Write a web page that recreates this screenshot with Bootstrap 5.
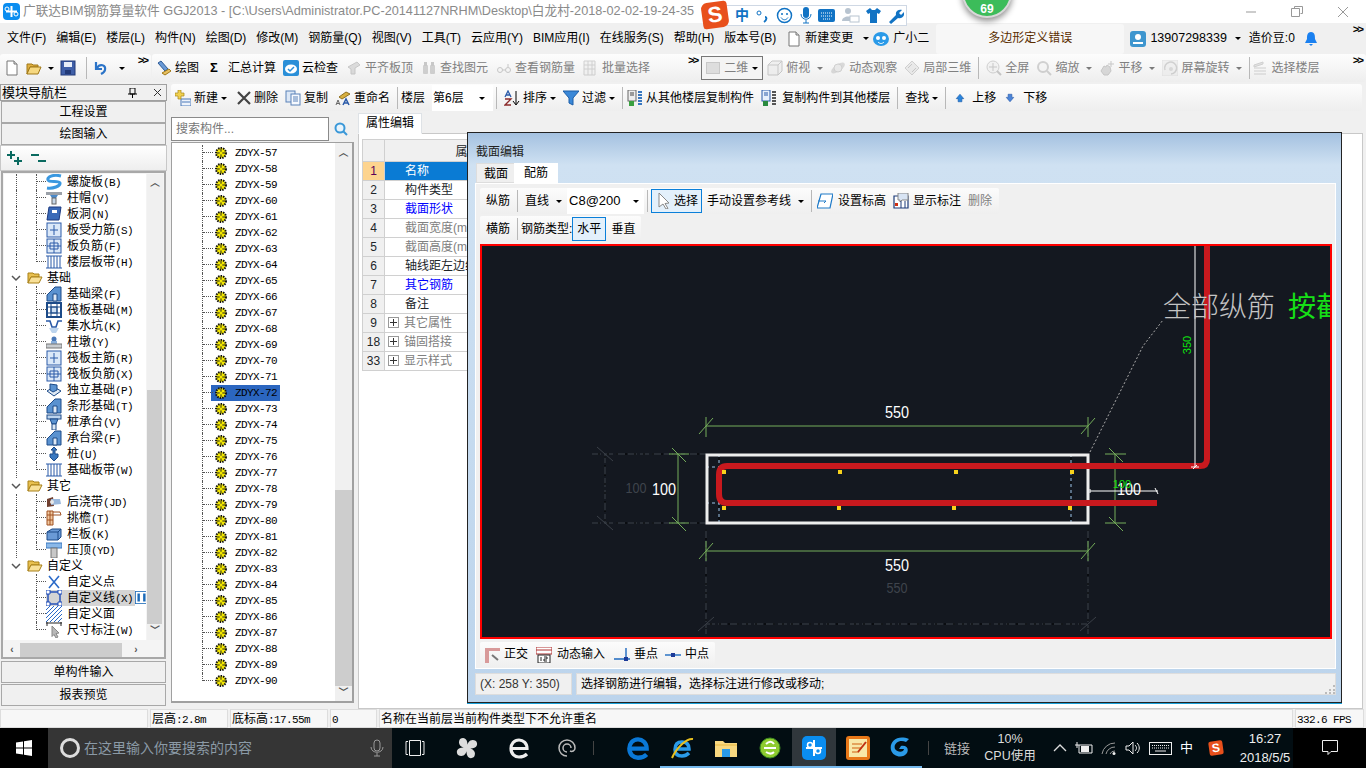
<!DOCTYPE html>
<html lang="zh">
<head>
  <meta charset="UTF-8">
  <title>广联达BIM钢筋算量软件 GGJ2013</title>
  <link href="https://cdn.jsdelivr.net/npm/bootstrap@5.3.0/dist/css/bootstrap.min.css" rel="stylesheet">
  <style>
    html, body { width: 1366px; height: 768px; overflow: hidden; }
    body {
      position: relative;
      font: 12px/1.2 "Liberation Sans", "Noto Sans CJK SC", sans-serif;
      color: #000;
      background: #f0f0f0;
    }
    .ic { width: 16px; height: 16px; flex: none; display: block; }
    .ic-sm { width: 10px; height: 16px; flex: none; display: block; }
    .mono { font: 11px "Liberation Mono", "Noto Sans CJK SC", monospace; letter-spacing: -.6px; }
    .caret-dn { width: 0; height: 0; border: 3px solid transparent; border-top: 3px solid #000; border-bottom: 0; flex: none; }

    /* title bar */
    .title-bar { height: 23px; background: #fff; color: #8a8a8a; font-size: 12.7px; white-space: nowrap; padding-left: 3px; }
    .title-bar .winbtn { width: 46px; display: flex; justify-content: center; }
    .app-logo { width: 17px; height: 17px; background: #0a8df0; border-radius: 4px; flex: none; }
    .ball { position: absolute; left: 962px; top: -32px; width: 50px; height: 50px; border-radius: 50%; background: #3cbc5a; border: 2px solid #d8d8d8; box-shadow: 0 3px 6px rgba(0,0,0,.45); color: #fff; font-weight: 700; font-size: 12px; text-align: center; padding-top: 32px; }
    .ime { position: absolute; left: 703px; top: 5px; width: 204px; height: 21px; background: #fff; border: 1px solid #cfd8e4; color: #1173c4; padding-left: 31px; gap: 6.5px; }
    .ime-s { position: absolute; left: 702px; top: 2px; width: 26px; height: 26px; background: #e8501c; border-radius: 6px 3px 6px 3px; transform: rotate(-8deg); color: #fff; font: 700 22px/25px "Liberation Sans", sans-serif; text-align: center; }

    /* menu and toolbars */
    .menu-bar { height: 31px; padding-left: 7px; }
    .menu-bar .mi { margin-right: 10px; white-space: nowrap; }
    .err-box { width: 188px; height: 30px; background: #f7f7f7; color: #5a2d00; border-radius: 3px; margin-left: 7px; }
    .tbar { height: 28px; background: linear-gradient(#fdfdfd, #eeeeee); border-radius: 3px; white-space: nowrap; }
    .tool { display: inline-flex; align-items: center; gap: 3px; }
    .tool.g1 { margin-left: 1px; }
    .off { color: #808080; }
    .off .ic { opacity: .5; }
    .tsep { width: 1px; height: 22px; background: #b8b8b8; flex: none; }
    .more { font: 700 11px/1 "Liberation Mono", monospace; letter-spacing: -2px; align-self: flex-start; margin-top: 2px; }
    .combo-2d { width: 62px; height: 24px; border: 1px solid #777; background: #f4f4f4; padding: 0 4px; color: #808080; }
    .combo-2d i { width: 14px; height: 12px; background: #ddd; border: 1px solid #c8c8c8; display: block; }
    .floor-combo { width: 61px; height: 26px; background: #fff; padding: 0 8px 0 1px; }

    /* left navigator */
    .main-wrap { height: 624px; }
    .nav-pane { width: 167px; flex: none; }
    .nav-head { height: 17px; border: 1px solid #a0a0a0; font-size: 13px; line-height: 15px; padding-left: 1px; }
    .nav-btn.btn { display: block; width: 165px; height: 22px; margin-left: 1px; padding: 0; font-size: 12px; line-height: 20px; border: 1px solid #a8a8a8; border-radius: 0; background: #f0f0f0; color: #000; }
    .plus-row { height: 26px; background: linear-gradient(#fff, #eee); border: 1px solid #c8c8c8; padding-left: 6px; }
    .tree-box { height: 488px; margin: 0 1px; border: 2px solid #a8a8a8; background: #f4f4f4; padding: 1px 0 0 1px; }
    .tree-view { height: 466px; width: 142px; background: #fff; overflow: hidden; }
    .vscroll { width: 16px; background: #f0f0f0; position: relative; }
    .arrow-up, .arrow-dn, .arrow-lf, .arrow-rt { display: block; font: 700 10px/14px "Liberation Sans", "Noto Sans CJK SC", sans-serif; color: #555; text-align: center; }
    .tr { height: 16px; display: flex; white-space: nowrap; position: relative; }
    .tr-l1 { width: 13px; flex: none; border-right: 1px dotted #555; }
    .tr-l2 { width: 20px; flex: none; border-right: 1px dotted #555; }
    .tr-half { height: 8px; }
    .tr-hz { width: 9px; height: 8px; flex: none; border-bottom: 1px dotted #555; }
    .tr-ch { width: 23px; flex: none; text-align: center; }
    .tr-folder { margin-left: 4px; line-height: 16px; }
    .tr-name { margin-left: 5px; line-height: 16px; }
    .tr.sel .tr-name, .tr.sel .ic { background: #d4d4d4; }
    .tr.sel .tr-name { padding-right: 2px; margin-left: 0; padding-left: 5px; }
    .tag-ic { width: 13px; height: 13px; flex: none; display: block; margin-top: 1px; }

    /* component tree */
    .work-col { width: 1192px; margin-left: 4px; }
    .bar-3 { height: 27px; padding: 1px 0 0 4px; width: 1191px; }
    .work-body { height: 597px; }
    .list-pane { width: 183px; flex: none; padding-top: 6px; }
    .search-box { height: 24px; }
    .search-box .form-control { height: 24px; border-radius: 0; padding: 0 4px; font-size: 12px; border: 1px solid #8a8a8a; color: #888; }
    .search-box .form-control::placeholder { color: #777; }
    .search-btn { width: 26px; background: #f0f0f0; display: flex; align-items: center; justify-content: center; }
    .list-area { height: 561px; margin-top: 1px; background: #fff; border: 1px solid #a0a0a0; border-width: 1px 2px 2px 1px; overflow: hidden; }
    .zd-tree { flex: 1; padding: 2px 0 0 30px; }
    .zd { height: 16px; display: flex; align-items: flex-start; border-left: 1px dotted #555; }
    .zd.tail { height: 8px; }
    .zd .lnk { width: 10px; height: 8px; border-bottom: 1px dotted #555; flex: none; }
    .zd .zd-ic { width: 12px; height: 12px; flex: none; display: block; margin: 2px 0 0 2px; }
    .zd .nm { line-height: 16px; padding-left: 8px; width: 50px; }
    .zd.on { background: linear-gradient(#2b66c0, #2b66c0) no-repeat 8px 0 / 69px 16px; }

    /* property table */
    .prop-pane { flex: 1; margin-left: 4px; padding-top: 1px; }
    .nav-tabs.prop-tabs { border-bottom: 1px solid #c8c8c8; height: 21px; }
    .prop-tabs .nav-link { padding: 2px 7px; height: 21px; font-size: 12px; color: #000; border: 1px solid #c8c8c8; border-bottom-color: #fff; border-radius: 0; background: #fff; margin: 0; }
    .prop-area { height: 575px; background: #fff; border: 1px solid #c8c8c8; border-top: 0; padding: 5px 0 0 3px; }
    .prop-table.table { width: 400px; margin: 0; table-layout: fixed; border-color: #c8c8c8; font-size: 12px; }
    .prop-table td, .prop-table th { padding: 0; height: 19px; line-height: 18px; border: 1px solid #d0d0d0; font-weight: 400; white-space: nowrap; overflow: hidden; }
    .prop-table .num { width: 22px; background: #f0f0f0; text-align: center; font-size: 12px; }
    .prop-table .nm-cell { padding-left: 20px; }
    .prop-table th { height: 22px; text-align: center; background: #f0f0f0; }
    .prop-table .cur-num { background: #fdd48f; color: #5a005a; }
    .prop-table .cur-name { background: #0a7bd4; color: #fff; }
    .blue-t { color: #0000ff; }
    .gray-t { color: #808080; }
    .pbox { display: inline-block; width: 11px; height: 11px; border: 1px solid #999; margin: 0 5px 0 3px; position: relative; vertical-align: -1px; background: linear-gradient(#333,#333) no-repeat center / 7px 1px, linear-gradient(#333,#333) no-repeat center / 1px 7px; }

    /* section dialog */
    .sec-dialog { position: absolute; left: 467px; top: 132px; width: 875px; height: 571px; background: linear-gradient(#a4c1e0, #cfe1f2 32px, #bcd4ec); border: 1px solid #222; box-shadow: 0 1px 0 #1aa0d8; }
    .dlg-title { height: 30px; padding: 12px 0 0 8px; color: #222; font-size: 12px; }
    .dlg-tabs { height: 20px; padding-left: 8px; font-size: 12px; }
    .dlg-tabs span { height: 20px; padding: 3px 7px 0; background: #efefef; border: 1px solid #ddd; }
    .dlg-tabs .on-tab { background: #fff; border-color: #fff; padding: 2px 9px 0; margin-left: -2px; }
    .dlg-body { width: 861px; height: 486px; margin-left: 7px; background: #f0f0f0; border: 1px solid #fff; padding: 4px 4px 0; }
    .dbar { height: 26px; background: linear-gradient(#fcfcfc, #efefef); border-radius: 2px; white-space: nowrap; gap: 7px; padding-left: 6px; }
    .rebar-combo { width: 77px; height: 26px; background: #fff; padding: 0 5px 0 2px; margin-left: -2px; font-size: 13px; }
    .act { border: 1px solid #0a7fd9; background: #e3f0fb; height: 24px; display: inline-flex; align-items: center; gap: 2px; padding: 0 3px 0 4px; }
    .canvas-box { height: 395px; width: 852px; border: 2px solid #f00; background: #141820; overflow: hidden; margin-top: 2px; }
    .canvas-box svg { display: block; }
    .canvas-box text { font-family: "Liberation Sans", "Noto Sans CJK SC", sans-serif; }
    .dlg-status { height: 22px; margin: 4px 0 0 7px; width: 861px; }
    .dlg-status div { background: #f0f0f0; border: 1px solid #ddd; line-height: 20px; padding-left: 4px; }

    /* bottom status and taskbar */
    .status-bar { height: 20px; padding-top: 1px; }
    .status-bar div { height: 19px; background: #f7f7f7; border: 1px solid #ddd; line-height: 18px; padding-left: 1px; overflow: hidden; white-space: nowrap; margin-right: 2px; flex: none; }
    .task-bar { height: 40px; background: #020d12; color: #ddd; }
    .start-cell { width: 48px; height: 40px; background: #000; display: flex; align-items: center; justify-content: center; }
    .search-task { width: 344px; height: 40px; background: #353535; color: #8b9aa6; font-size: 14px; padding-left: 12px; }
    .cortana { width: 20px; height: 20px; border: 3px solid #ddd; border-radius: 50%; margin: 0 4px 0 0; flex: none; }
    .t-cell { width: 44px; height: 40px; display: flex; align-items: center; justify-content: center; flex: none; position: relative; }
    .t-cell.run { box-shadow: inset 0 -2px 0 #76b9ed; }
    .t-cell.cur { background: #30373c; box-shadow: inset 0 -2px 0 #76b9ed; }
    .tray-t { font-size: 13px; line-height: 19px; text-align: center; white-space: nowrap; }
  </style>
</head>
<body>
  <svg width="0" height="0" class="d-none">
    <defs>
      <symbol id="i-new" viewBox="0 0 16 16"><path d="M3 1h7l3 3v11H3z" fill="#fff" stroke="#777"/><path d="M10 1v3h3" fill="#ddd" stroke="#777"/></symbol>
      <symbol id="i-open" viewBox="0 0 16 16"><path d="M1 4h5l1 1h5v2H4l-3 7z" fill="#e0b040" stroke="#a07818"/><path d="M4 7h11l-3 7H1z" fill="#f6d880" stroke="#a07818"/></symbol>
      <symbol id="i-save" viewBox="0 0 16 16"><rect x="1" y="1" width="14" height="14" fill="#3f5fa8" stroke="#223a78"/><rect x="4" y="2" width="8" height="5" fill="#e8eef8"/><rect x="5" y="10" width="6" height="4" fill="#223a78"/></symbol>
      <symbol id="i-undo" viewBox="0 0 16 16"><path d="M3 2v7h6M4 8c3-5 9-3 8 2-.4 2-2 3-4 4" fill="none" stroke="#2c74c8" stroke-width="2.200"/></symbol>
      <symbol id="i-draw" viewBox="0 0 16 16"><path d="M2 3l3-2 7 8-3 2z" fill="#6a9ad6" stroke="#2c5a96"/><path d="M6 13l7-4 2 2-6 4z" fill="#e8c060" stroke="#a07818"/></symbol>
      <symbol id="i-cloud" viewBox="0 0 16 16"><rect x="0" y="0" width="16" height="16" rx="2" fill="#2a8fd8"/><ellipse cx="8" cy="9" rx="6" ry="4.500" fill="#fff"/><path d="M5 9l2 2 4-4" fill="none" stroke="#2a8fd8" stroke-width="1.500"/></symbol>
      <symbol id="i-flat" viewBox="0 0 16 16"><path d="M2 7l9-5 3 3-5 3v6H5V9z" fill="#c0c0c0" stroke="#999"/></symbol>
      <symbol id="i-bino" viewBox="0 0 16 16"><rect x="2" y="5" width="5" height="9" rx="1" fill="#aaa"/><rect x="9" y="5" width="5" height="9" rx="1" fill="#aaa"/><rect x="3" y="2" width="3" height="4" fill="#999"/><rect x="10" y="2" width="3" height="4" fill="#999"/></symbol>
      <symbol id="i-glass" viewBox="0 0 16 16"><circle cx="4" cy="10" r="2.500" fill="none" stroke="#999"/><circle cx="12" cy="10" r="2.500" fill="none" stroke="#999"/><path d="M6.500 10h3M12 7V4" stroke="#999" fill="none"/></symbol>
      <symbol id="i-batch" viewBox="0 0 16 16"><path d="M1 1h11v14H1zM1 5h11M1 9h11M5 1v14M9 1v14" fill="#eee" stroke="#aaa"/></symbol>
      <symbol id="i-cube" viewBox="0 0 16 16"><path d="M1 5l4-4h10v10l-4 4H1zM1 5h10v10M11 5l4-4" fill="#e8e8e8" stroke="#999"/></symbol>
      <symbol id="i-orbit" viewBox="0 0 16 16"><ellipse cx="8" cy="8" rx="8" ry="3.500" transform="rotate(-35 8 8)" fill="#bbb"/><circle cx="8" cy="8" r="4" fill="#ddd" stroke="#aaa"/></symbol>
      <symbol id="i-3d" viewBox="0 0 16 16"><path d="M1 8l7-7 7 7-7 7z" fill="#ddd" stroke="#aaa"/><path d="M4 8l4-4M8 12l4-4" stroke="#999" fill="none"/></symbol>
      <symbol id="i-full" viewBox="0 0 16 16"><circle cx="7" cy="7" r="6" fill="#eee" stroke="#aaa"/><path d="M7 3v8M3 7h8" stroke="#999"/><path d="M11 11l4 4" stroke="#999" stroke-width="2"/></symbol>
      <symbol id="i-zoom" viewBox="0 0 16 16"><circle cx="7" cy="7" r="5" fill="#f4f4f4" stroke="#aaa" stroke-width="2"/><path d="M11 11l4 4" stroke="#aaa" stroke-width="2"/></symbol>
      <symbol id="i-hand" viewBox="0 0 16 16"><path d="M2 11l3-5 2 1 1-2 3 2 1 4-3 4H5z" fill="#bbb" stroke="#999"/><path d="M12 1v6M9 4h6" stroke="#999"/></symbol>
      <symbol id="i-rot" viewBox="0 0 16 16"><rect x="0" y="0" width="16" height="16" fill="#e8e8e8" stroke="#ccc"/><path d="M3 10a6 6 0 1 1 6 4" fill="none" stroke="#aaa" stroke-width="1.500"/><circle cx="9" cy="9" r="2" fill="#bbb"/></symbol>
      <symbol id="i-layer" viewBox="0 0 16 16"><path d="M2 5l9-3v2l-9 3zM2 8h12M2 11h12M2 14h12" fill="#ccc" stroke="#aaa"/></symbol>
      <symbol id="i-add" viewBox="0 0 16 16"><rect x="6" y="9" width="10" height="7" fill="#eef3fb" stroke="#4a78b8"/><path d="M7 12h8" stroke="#4a78b8"/><path d="M3 0h3v3h3v3H6v3H3V6H0V3h3z" fill="#f0d050" stroke="#a88818" stroke-width=".7"/></symbol>
      <symbol id="i-x" viewBox="0 0 16 16"><path d="M2 2l12 12M14 2L2 14" stroke="#444" stroke-width="2.200"/></symbol>
      <symbol id="i-copy" viewBox="0 0 16 16"><rect x="1" y="1" width="9" height="11" fill="#dde8f6" stroke="#5a82b8"/><rect x="6" y="4" width="9" height="11" fill="#f6f9fe" stroke="#5a82b8"/><path d="M8 7h5M8 9h5M8 11h5" stroke="#5a82b8"/></symbol>
      <symbol id="i-ren" viewBox="0 0 16 16"><path d="M4 7l7-5 4 2-8 5z" fill="#d8b040" stroke="#907020"/><path d="M1 15l2-5 2 5M2 13.500h2" fill="none" stroke="#666"/><path d="M8 15l3-6 3 6M9.500 13h3" fill="none" stroke="#2a5aa8" stroke-width="1.500"/></symbol>
      <symbol id="i-sort" viewBox="0 0 16 16"><path d="M1 7l3-6 3 6M2 5h4" fill="none" stroke="#2a5aa8" stroke-width="1.300"/><path d="M1 9h6l-6 6h6" fill="none" stroke="#8a2a2a" stroke-width="1.300"/><path d="M12 1v13M9 11l3 4 3-4" fill="none" stroke="#000"/></symbol>
      <symbol id="i-funnel" viewBox="0 0 16 16"><path d="M0 1h16l-6 7v7l-4-2V8z" fill="#3a88d8" stroke="#1c5ea8"/></symbol>
      <symbol id="i-cp1" viewBox="0 0 16 16"><rect x="1" y="0" width="8" height="11" fill="#eee" stroke="#666"/><path d="M3 3h4M3 5h4" stroke="#444"/><rect x="2" y="11" width="5" height="5" fill="#3aa040"/><path d="M11 2h4M11 5h4M11 8h4M11 11h4M11 14h4" stroke="#3a78c0" stroke-width="2"/></symbol>
      <symbol id="i-cp2" viewBox="0 0 16 16"><rect x="1" y="0" width="8" height="11" fill="#e8f0fc" stroke="#2a5aa8"/><path d="M3 3h4M3 5h4" stroke="#2a5aa8"/><rect x="2" y="11" width="5" height="5" fill="#2a8a40"/><path d="M11 2h4M11 5h4M11 8h4M11 11h4M11 14h4" stroke="#555" stroke-width="2"/></symbol>
      <symbol id="i-up" viewBox="0 0 16 16"><path d="M8 2l6 7h-3v5H5V9H2z" fill="#2a84dc" stroke="#1a5aa8"/></symbol>
      <symbol id="i-down" viewBox="0 0 16 16"><path d="M8 14l6-7h-3V2H5v5H2z" fill="#4a84d8" stroke="#2a5aa8"/></symbol>
      <symbol id="i-zd" viewBox="0 0 12 12"><circle cx="6" cy="6" r="5" fill="#f4e800" stroke="#111" stroke-width="2" stroke-dasharray="1.500 1"/><path d="M2 6h8M6 2v8" stroke="#222"/><circle cx="6" cy="6" r="1.500" fill="#f4e800"/></symbol>
      <symbol id="i-spiral" viewBox="0 0 16 16"><path d="M15 2C7 0 1 3 2 6c1 3 11 0 12 3 .5 3-7 6-13 5" fill="none" stroke="#3a98e0" stroke-width="3"/></symbol>
      <symbol id="i-cap" viewBox="0 0 16 16"><rect x="0" y="2" width="16" height="3" fill="#9aa0a8"/><path d="M4 5h8l-2 3H6z" fill="#4a88c8"/><rect x="6" y="8" width="4" height="6" fill="#c8d8e8" stroke="#666"/></symbol>
      <symbol id="i-hole" viewBox="0 0 16 16"><path d="M3 1h12l-2 13H1z" fill="#3a6ab8" stroke="#1c3a80"/><rect x="6" y="4" width="5" height="3" fill="#fff"/></symbol>
      <symbol id="i-gridc" viewBox="0 0 16 16"><rect x="1" y="1" width="14" height="14" fill="#dbe8f8" stroke="#2a5aa8"/><path d="M8 3v10M4 8h8" stroke="#2a5aa8" fill="none"/></symbol>
      <symbol id="i-gridh" viewBox="0 0 16 16"><rect x="1" y="1" width="14" height="14" fill="#dbe8f8" stroke="#2a5aa8"/><path d="M1 8h14M8 1v14M4 5h8v6H4z" stroke="#2a5aa8" fill="none"/></symbol>
      <symbol id="i-strip" viewBox="0 0 16 16"><path d="M0 2h16M0 14h16M2 2v12M8 2v12M14 2v12M5 2v12M11 2v12" stroke="#2a5aa8" fill="none"/></symbol>
      <symbol id="i-beam" viewBox="0 0 16 16"><path d="M1 15V9l8-8h6v14z" fill="#5a92d0" stroke="#1c4a88"/><path d="M7 15V8h4v7z" fill="#dde8f4" stroke="#1c4a88"/></symbol>
      <symbol id="i-raft" viewBox="0 0 16 16"><rect x="1" y="1" width="14" height="14" fill="none" stroke="#1c4a88" stroke-width="2"/><rect x="5" y="5" width="6" height="6" fill="#cfe0f4" stroke="#1c4a88"/><path d="M5 1v14M11 1v14M1 5h14M1 11h14" stroke="#1c4a88"/></symbol>
      <symbol id="i-pit" viewBox="0 0 16 16"><path d="M0 3h4l2 6h4l2-6h4" fill="none" stroke="#2a5aa8" stroke-width="1.600"/><path d="M3 10h10l-3 5H6z" fill="#bcd4ee"/></symbol>
      <symbol id="i-pier" viewBox="0 0 16 16"><circle cx="8" cy="5" r="2.500" fill="#4a78b8"/><path d="M5 7h6v3H5z" fill="#8ab0dc"/><rect x="0" y="10" width="16" height="4" fill="#c8ccd0" stroke="#777"/></symbol>
      <symbol id="i-ind" viewBox="0 0 16 16"><path d="M1 9l7-4 7 4-7 5z" fill="#dde8f4" stroke="#1c4a88"/><path d="M4 8V2l7 1v5l-4 2z" fill="#5a92d0" stroke="#1c4a88"/></symbol>
      <symbol id="i-cone" viewBox="0 0 16 16"><rect x="1" y="1" width="14" height="4" fill="#bcd4ee" stroke="#1c4a88"/><path d="M4 5h8l-2 5H6z" fill="#5a92d0" stroke="#1c4a88"/><rect x="6" y="10" width="4" height="6" fill="#dde8f4" stroke="#1c4a88"/></symbol>
      <symbol id="i-pile" viewBox="0 0 16 16"><path d="M8 1l3 3H9v4h3v3l-4 4-4-4V8h3V4H5z" fill="#3a78c0" stroke="#1c4a88"/></symbol>
      <symbol id="i-post" viewBox="0 0 16 16"><path d="M1 5l6-2 1 9-7 1z" fill="#704030"/><path d="M5 5h9l1 5-10 1z" fill="#9ab8dc"/><circle cx="6" cy="8" r="2" fill="#e8e8e8"/></symbol>
      <symbol id="i-eave" viewBox="0 0 16 16"><path d="M1 1h6v14H1z" fill="#f0c8a0" stroke="#a05020"/><path d="M1 5h6M1 10h6M4 1v14M7 2h7l1 3H7" fill="none" stroke="#a05020"/></symbol>
      <symbol id="i-rail" viewBox="0 0 16 16"><path d="M1 6l5-3h9v8l-3 3H1z" fill="#6a9ad6" stroke="#1c4a88"/><path d="M1 6h11v8M12 6l3-3" fill="none" stroke="#1c4a88"/></symbol>
      <symbol id="i-press" viewBox="0 0 16 16"><rect x="0" y="1" width="16" height="5" fill="#8ab8e8" stroke="#3a78c0"/><rect x="5" y="6" width="6" height="10" fill="#c8c8c8" stroke="#777"/></symbol>
      <symbol id="i-pt" viewBox="0 0 16 16"><path d="M3 2l10 12M13 2L3 14" stroke="#2a6ac8" stroke-width="1.600"/></symbol>
      <symbol id="i-ln" viewBox="0 0 16 16"><rect x="2" y="2" width="12" height="12" fill="none" stroke="#1c4ab8" stroke-width="1.400"/><path d="M0 0h4v4H0zM12 0h4v4h-4zM0 12h4v4H0zM12 12h4v4h-4z" fill="#fff" stroke="#1c4ab8"/></symbol>
      <symbol id="i-fc" viewBox="0 0 16 16"><path d="M0 4l4-4M0 8l8-8M0 12L12 0M0 16L16 0M4 16L16 4M8 16l8-8M12 16l4-4" stroke="#2a6ac8"/></symbol>
      <symbol id="i-dim" viewBox="0 0 16 16"><path d="M0 1h16M1 0v4M15 0v4" stroke="#222"/><path d="M6 4l7 7-3 .5 2 3.500-2 1-2-3.500-2 2z" fill="#b8b8b8" stroke="#888"/></symbol>
      <symbol id="i-arrow" viewBox="0 0 16 16"><path d="M3 0l10 10-4 .5 3 5-2 .5-3-5-4 3z" fill="#fff" stroke="#888"/></symbol>
      <symbol id="i-elev" viewBox="0 0 16 16"><path d="M4 1h12l-3 14H0z" fill="#fff" stroke="#1e7ac8" stroke-width="1.200"/><path d="M1 8h8l-2 2" fill="none" stroke="#1e7ac8"/></symbol>
      <symbol id="i-mark" viewBox="0 0 16 16"><path d="M1 3h14v12H1z" fill="#fff" stroke="#1c3a78" stroke-width="1.200"/><path d="M5 0h10v7H9l-2 2V7H5z" fill="#d8e4f4" stroke="#888"/><rect x="2" y="10" width="3" height="3" fill="#d03010"/><path d="M8 8v7M12 8v7" stroke="#1c3a78"/></symbol>
      <symbol id="i-ortho" viewBox="0 0 16 16"><path d="M1 1h15v3H5v12H1z" fill="#d89a9a"/><path d="M8 8l6 5" stroke="#777" stroke-width="2"/></symbol>
      <symbol id="i-dyn" viewBox="0 0 16 16"><path d="M0 0h16v7H0zM0 3h16" fill="#fff" stroke="#b03030"/><rect x="2" y="8" width="12" height="8" fill="#fff" stroke="#222"/><path d="M5 10v4M8 10h3v2H8v2h3" fill="none" stroke="#222"/></symbol>
      <symbol id="i-perp" viewBox="0 0 16 16"><path d="M0 12h16M12 1v11" stroke="#1e6ac0" stroke-width="1.400"/><rect x="10" y="10" width="4" height="4" fill="#1c3a98"/></symbol>
      <symbol id="i-mid" viewBox="0 0 16 16"><path d="M0 8h16" stroke="#1e6ac0" stroke-width="1.400"/><rect x="6" y="6" width="4" height="4" fill="#1c3a98"/></symbol>
    </defs>
  </svg>

  <!-- title bar -->
  <div class="title-bar d-flex align-items-center">
    <svg class="app-logo" style="margin-right:3px" viewBox="0 0 17 17"><path d="M8.500 3v11M3 8.500h11" stroke="#fff" stroke-width="2" fill="none"/><circle cx="4" cy="6" r="2" fill="none" stroke="#fff"/><circle cx="13" cy="11" r="2" fill="none" stroke="#fff"/></svg>
    <span>广联达BIM钢筋算量软件 GGJ2013 - [C:\Users\Administrator.PC-20141127NRHM\Desktop\白龙村-2018-02-02-19-24-35</span>
    <div class="ms-auto d-flex">
      <span class="winbtn"><svg width="12" height="12"><path d="M1 6h10" stroke="#999"/></svg></span>
      <span class="winbtn"><svg width="12" height="12"><path d="M3.500 2.500v-2h8v7h-2M.5 2.500h8v8h-8z" fill="none" stroke="#999"/></svg></span>
      <span class="winbtn"><svg width="12" height="12"><path d="M1 1l10 10M11 1L1 11" stroke="#999"/></svg></span>
    </div>
  </div>
  <div class="ball">69</div>
  <div class="ime d-flex align-items-center">
    <b style="font-size:14px">中</b>
    <svg width="14" height="14" viewBox="0 0 14 14"><circle cx="3" cy="4" r="2" fill="none" stroke="#1173c4"/><path d="M9 8c2 0 2 3-1 5" fill="none" stroke="#1173c4" stroke-width="2"/></svg>
    <svg width="17" height="17" viewBox="0 0 17 17"><circle cx="8.500" cy="8.500" r="7" fill="none" stroke="#1173c4" stroke-width="1.500"/><circle cx="6" cy="7" r="1" fill="#1173c4"/><circle cx="11" cy="7" r="1" fill="#1173c4"/><path d="M5 10.500c2 3 5 3 7 0" fill="none" stroke="#1173c4"/></svg>
    <svg width="12" height="17" viewBox="0 0 12 17"><rect x="3" y="0" width="6" height="11" rx="3" fill="#1173c4"/><path d="M1 7c0 7 10 7 10 0M6 13v3M3 16h6" fill="none" stroke="#1173c4"/></svg>
    <svg width="17" height="13" viewBox="0 0 17 13"><rect width="17" height="13" rx="2" fill="#1173c4"/><path d="M3 4h11M3 7h11M5 10h7" stroke="#fff" stroke-dasharray="1 1"/></svg>
    <svg width="18" height="17" viewBox="0 0 18 17"><circle cx="6" cy="4" r="3" fill="#b8c4d0"/><path d="M0 14c0-6 12-6 12 0z" fill="#b8c4d0"/><rect x="8" y="9" width="9" height="6" fill="#fff" stroke="#b8c4d0"/></svg>
    <svg width="15" height="15" viewBox="0 0 15 15"><path d="M4 0L0 3l2 3 2-1v10h7V5l2 1 2-3-4-3-2 2H6z" fill="#1173c4"/></svg>
    <svg width="16" height="16" viewBox="0 0 16 16"><path d="M1 14l7-7c-1-4 3-6 6-5l-3 3 2 2 3-3c1 4-2 7-6 6l-7 6z" fill="#1173c4"/></svg>
  </div>
  <div class="ime-s">S</div>

  <!-- menu -->
  <div class="menu-bar d-flex align-items-center">
    <span class="mi">文件(F)</span><span class="mi">编辑(E)</span><span class="mi">楼层(L)</span><span class="mi">构件(N)</span><span class="mi">绘图(D)</span><span class="mi">修改(M)</span><span class="mi">钢筋量(Q)</span><span class="mi">视图(V)</span><span class="mi">工具(T)</span><span class="mi">云应用(Y)</span><span class="mi">BIM应用(I)</span><span class="mi">在线服务(S)</span><span class="mi">帮助(H)</span><span class="mi">版本号(B)</span>
    <svg class="ic" style="margin-right:3px"><use href="#i-new"/></svg><span class="mi">新建变更</span><span class="caret-dn me-1"></span>
    <svg class="ic me-1" viewBox="0 0 16 16"><ellipse cx="8" cy="8" rx="8" ry="7" fill="#2a9ae8"/><circle cx="5" cy="7" r="2" fill="#fff"/><circle cx="11" cy="7" r="2" fill="#fff"/><path d="M5 11c2 2 4 2 6 0" stroke="#fff" fill="none"/></svg><span>广小二</span>
    <div class="err-box d-flex align-items-center justify-content-center">多边形定义错误</div>
    <svg class="ic me-1" style="margin-left:6px" viewBox="0 0 16 16"><rect width="16" height="16" rx="3" fill="#3e96cf"/><circle cx="8" cy="6" r="3" fill="#fff"/><path d="M3 13h10v-2H3z" fill="#fff"/></svg>
    <span style="font-size:12.500px">13907298339</span><span class="caret-dn mx-2"></span><span>造价豆:0</span>
    <svg class="ic ms-2" viewBox="0 0 16 16"><path d="M8 1c4 0 4 4 4 7l2 4H2l2-4c0-3 0-7 4-7zM6 13h4l-2 2z" fill="#1a80f0"/></svg>
    <span class="more ms-auto me-1">&gt;&gt;</span>
  </div>

  <!-- main toolbar, split in two floating strips -->
  <div class="d-flex" style="height:30px;gap:1px">
    <div class="tbar d-flex align-items-center ps-1" style="width:151px;gap:6px">
      <svg class="ic"><use href="#i-new"/></svg>
      <svg class="ic"><use href="#i-open"/></svg><span class="caret-dn"></span>
      <svg class="ic"><use href="#i-save"/></svg><span class="tsep ms-1"></span>
      <svg class="ic"><use href="#i-undo"/></svg><span class="caret-dn ms-1"></span>
      <span class="more ms-auto me-1">&gt;&gt;</span>
    </div>
    <div class="tbar d-flex align-items-center flex-grow-1 ps-1" style="gap:7px">
      <span class="tool"><svg class="ic"><use href="#i-draw"/></svg>绘图</span>
      <span class="tool ms-1"><b style="font-size:13px;width:15px">Σ</b>汇总计算</span>
      <span class="tool"><svg class="ic"><use href="#i-cloud"/></svg>云检查</span>
      <span class="tool off g1"><svg class="ic"><use href="#i-flat"/></svg>平齐板顶</span>
      <span class="tool off g1"><svg class="ic"><use href="#i-bino"/></svg>查找图元</span>
      <span class="tool off g1"><svg class="ic"><use href="#i-glass"/></svg>查看钢筋量</span>
      <span class="tool off g1"><svg class="ic"><use href="#i-batch"/></svg>批量选择</span>
      <span class="more" style="margin-left:31px">&gt;&gt;</span>
      <span class="combo-2d d-flex align-items-center gap-1 off" style="margin-left:-3px"><i></i>二维<span class="caret-dn ms-auto"></span></span>
      <span class="tool off" style="margin-left:-3px"><svg class="ic"><use href="#i-cube"/></svg>俯视</span><span class="caret-dn" style="opacity:.5"></span>
      <span class="tool off"><svg class="ic"><use href="#i-orbit"/></svg>动态观察</span>
      <span class="tool off"><svg class="ic"><use href="#i-3d"/></svg>局部三维</span>
      <span class="tsep"></span>
      <span class="tool off"><svg class="ic"><use href="#i-full"/></svg>全屏</span>
      <span class="tool off"><svg class="ic"><use href="#i-zoom"/></svg>缩放</span><span class="caret-dn" style="opacity:.5"></span>
      <span class="tool off"><svg class="ic"><use href="#i-hand"/></svg>平移</span><span class="caret-dn" style="opacity:.5"></span>
      <span class="tool off"><svg class="ic"><use href="#i-rot"/></svg>屏幕旋转</span><span class="caret-dn" style="opacity:.5"></span>
      <span class="tsep"></span>
      <span class="tool off" style="margin-left:-5px"><svg class="ic"><use href="#i-layer"/></svg>选择楼层</span>
      <span class="more ms-auto me-1">&gt;&gt;</span>
    </div>
  </div>

  <div class="main-wrap d-flex">
    <!-- module navigator -->
    <div class="nav-pane">
      <div class="nav-head d-flex align-items-center">模块导航栏
        <svg class="ms-auto me-3" width="9" height="10"><path d="M2 0h5v6H2zM0 6h9M4.500 6v4" fill="none" stroke="#000"/></svg>
        <svg class="me-1" width="9" height="9"><path d="M1 1l7 7M8 1L1 8" stroke="#333"/></svg>
      </div>
      <button class="btn nav-btn mt-0">工程设置</button>
      <button class="btn nav-btn">绘图输入</button>
      <div class="plus-row d-flex align-items-center gap-2 mx-0">
        <svg width="16" height="16" viewBox="0 0 16 16"><path d="M4 1v8M0 5h8M11 7v8M7 11h8" stroke="#0a6a60" stroke-width="2"/></svg>
        <svg width="16" height="16" viewBox="0 0 16 16"><path d="M0 5h8M7 11h8" stroke="#0a6a60" stroke-width="2"/></svg>
      </div>
      <div class="tree-box">
        <div class="d-flex">
          <div class="tree-view" id="navTree"></div>
          <div class="vscroll" style="height:466px;margin-left:1px">
            <span class="arrow-up" style="height:14px;margin-top:2px">︿</span>
            <div style="height:234px;width:15px;background:#cdcdcd;margin-top:200px"></div>
            <span class="arrow-dn">﹀</span>
          </div>
        </div>
        <div class="d-flex align-items-center" style="height:14px;width:158px;margin-top:3px">
          <span class="arrow-lf" style="width:16px">‹</span>
          <div style="height:14px;width:102px;background:#cdcdcd"></div>
          <span class="arrow-rt" style="width:28px">›</span>
        </div>
      </div>
      <button class="btn nav-btn" style="margin-top:2px">单构件输入</button>
      <button class="btn nav-btn" style="margin-top:1px">报表预览</button>
    </div>

    <div class="work-col">
      <div class="tbar bar-3 d-flex align-items-center" style="gap:7px">
        <span class="tool"><svg class="ic"><use href="#i-add"/></svg>新建</span><span class="caret-dn" style="margin-left:-4px"></span>
        <span class="tool" style="gap:2px;margin-left:2px"><svg class="ic"><use href="#i-x"/></svg>删除</span>
        <span class="tool"><svg class="ic"><use href="#i-copy"/></svg>复制</span>
        <span class="tool"><svg class="ic"><use href="#i-ren"/></svg>重命名</span>
        <span class="tsep"></span>
        <span style="margin-left:-4px">楼层</span>
        <div class="floor-combo d-flex align-items-center"><span>第6层</span><span class="caret-dn ms-auto"></span></div>
        <span class="tsep" style="margin-left:-4px"></span>
        <span class="tool"><svg class="ic"><use href="#i-sort"/></svg>排序</span><span class="caret-dn" style="margin-left:-4px"></span>
        <span class="tool"><svg class="ic"><use href="#i-funnel"/></svg>过滤</span><span class="caret-dn" style="margin-left:-4px"></span>
        <span class="tsep"></span>
        <span class="tool" style="margin-left:-3px"><svg class="ic"><use href="#i-cp1"/></svg>从其他楼层复制构件</span>
        <span class="tool" style="gap:5px"><svg class="ic"><use href="#i-cp2"/></svg>复制构件到其他楼层</span>
        <span class="tsep"></span>
        <span class="tool">查找</span><span class="caret-dn" style="margin-left:-4px"></span>
        <span class="tsep"></span>
        <span class="tool" style="gap:7px;margin-left:2px"><svg class="ic-sm"><use href="#i-up"/></svg>上移</span>
        <span class="tool" style="gap:8px;margin-left:2px"><svg class="ic-sm"><use href="#i-down"/></svg>下移</span>
      </div>
      <div class="work-body d-flex">
        <div class="list-pane">
          <div class="search-box input-group flex-nowrap">
            <input class="form-control" placeholder="搜索构件...">
            <span class="search-btn"><svg width="16" height="16" viewBox="0 0 16 16"><circle cx="7" cy="7" r="4.500" fill="#e8f4fc" stroke="#3a98d8" stroke-width="2"/><path d="M10 10l4 4" stroke="#3a98d8" stroke-width="2"/></svg></span>
          </div>
          <div class="list-area d-flex">
            <div class="zd-tree" id="zdTree"></div>
            <div class="vscroll" style="height:100%;width:17px">
              <span class="arrow-up" style="height:14px;margin-top:3px">︿</span>
              <div style="height:196px;background:#cdcdcd;margin-top:330px"></div>
              <span class="arrow-dn">﹀</span>
            </div>
          </div>
        </div>
        <div class="prop-pane">
          <ul class="nav nav-tabs prop-tabs" style="margin-top:1px"><li class="nav-item"><a class="nav-link active" href="#">属性编辑</a></li></ul>
          <div class="prop-area">
            <table class="table prop-table">
              <colgroup><col style="width:22px"><col style="width:190px"><col></colgroup>
              <thead><tr><th class="num"></th><th>属性名称</th><th>属性值</th></tr></thead>
              <tbody>
                <tr><td class="num cur-num">1</td><td class="nm-cell cur-name">名称</td><td class="cur-name"></td></tr>
                <tr><td class="num">2</td><td class="nm-cell">构件类型</td><td></td></tr>
                <tr><td class="num">3</td><td class="nm-cell blue-t">截面形状</td><td></td></tr>
                <tr><td class="num">4</td><td class="nm-cell gray-t">截面宽度(mm)</td><td></td></tr>
                <tr><td class="num">5</td><td class="nm-cell gray-t">截面高度(mm)</td><td></td></tr>
                <tr><td class="num">6</td><td class="nm-cell">轴线距左边线距离</td><td></td></tr>
                <tr><td class="num">7</td><td class="nm-cell blue-t">其它钢筋</td><td></td></tr>
                <tr><td class="num">8</td><td class="nm-cell">备注</td><td></td></tr>
                <tr><td class="num">9</td><td class="gray-t"><span class="pbox"></span>其它属性</td><td></td></tr>
                <tr><td class="num">18</td><td class="gray-t"><span class="pbox"></span>锚固搭接</td><td></td></tr>
                <tr><td class="num">33</td><td class="gray-t"><span class="pbox"></span>显示样式</td><td></td></tr>
              </tbody>
            </table>
          </div>
        </div>
      </div>
    </div>
  </div>

  <!-- section dialog -->
  <div class="sec-dialog">
    <div class="dlg-title">截面编辑</div>
    <div class="dlg-tabs d-flex"><span>截面</span><span class="on-tab">配筋</span></div>
    <div class="dlg-body">
      <div class="dbar d-flex align-items-center" style="width:519px">
        <span>纵筋</span><span class="tsep"></span><span>直线</span><span class="caret-dn"></span>
        <div class="rebar-combo d-flex align-items-center"><span>C8@200</span><span class="caret-dn ms-auto"></span></div>
        <span class="tsep" style="margin-left:-4px"></span>
        <span class="act" style="margin-left:-4px"><svg class="ic"><use href="#i-arrow"/></svg>选择</span>
        <span style="margin-left:-2px">手动设置参考线</span><span class="caret-dn"></span><span class="tsep"></span>
        <span class="tool" style="gap:5px;margin-left:-2px"><svg class="ic"><use href="#i-elev"/></svg>设置标高</span>
        <span class="tool" style="gap:4px"><svg class="ic"><use href="#i-mark"/></svg>显示标注</span>
        <span class="off">删除</span>
      </div>
      <div class="dbar d-flex align-items-center" style="width:161px;margin-top:2px">
        <span>横筋</span><span class="tsep"></span><span style="margin-left:-4px">钢筋类型:</span><span class="act" style="margin-left:-7px;padding:0 4px">水平</span><span style="margin-left:-2px">垂直</span>
      </div>
      <div class="canvas-box">
        <svg width="848" height="391" viewBox="482 246 848 391">
          <!-- ghost dimensions -->
          <g stroke="#3b4048" fill="none" stroke-dasharray="9 3">
            <path d="M592 454h114M592 523h114M605 454v69M706 529v110M1088 529v110M706 624h382"/>
          </g>
          <g stroke="#000" fill="none" stroke-dasharray="2 7">
            <path d="M598 454h108M598 523h108M605 456v67M706 529v100M1088 529v100M710 624h378"/>
          </g>
          <path d="M597 447l16 14M597 516l16 14M698 631l16-14M1080 631l16-14" stroke="#3b4048" fill="none"/>
          <text x="636" y="493" text-anchor="middle" font-size="14" textLength="21" lengthAdjust="spacingAndGlyphs" fill="#3f444c">100</text>
          <text x="897" y="593" text-anchor="middle" font-size="14" textLength="21" lengthAdjust="spacingAndGlyphs" fill="#3f444c">550</text>
          <!-- green dimensions -->
          <g stroke="#74ad5a" fill="none">
            <path d="M706 426h382M706 417v20M1088 417v20M699 434l14-16M1081 434l14-16"/>
            <path d="M706 551h382M706 541v20M1088 541v20M699 559l14-16M1081 559l14-16"/>
            <path d="M678 454v69M669 454h20M669 523h20M672 448l14 14M672 517l14 14"/>
            <path d="M1115 454v69M1105 454h21M1105 523h21M1109 448l14 14M1109 517l14 14"/>
          </g>
          <text x="897" y="418" text-anchor="middle" font-size="16" textLength="24" lengthAdjust="spacingAndGlyphs" fill="#fff">550</text>
          <text x="897" y="571" text-anchor="middle" font-size="16" textLength="24" lengthAdjust="spacingAndGlyphs" fill="#fff">550</text>
          <text x="664" y="495" text-anchor="middle" font-size="16" textLength="24" lengthAdjust="spacingAndGlyphs" fill="#fff">100</text>
          <!-- inner reference dashes -->
          <path d="M719 454v69M1071 454v69" stroke="#9cc4e8" fill="none" stroke-dasharray="3 3"/>
          <path d="M719 457v66M1071 457v66" stroke="#000" fill="none" stroke-dasharray="3 9"/>
          <path d="M706 467h14M706 503h14" stroke="#9cc4e8" fill="none" stroke-dasharray="3 3"/>
          <!-- section outline -->
          <rect x="707" y="455" width="381" height="68" fill="none" stroke="#eee" stroke-width="3"/>
          <!-- rebar -->
          <path d="M1207 244V459Q1207 466 1200 466H727Q719 466 719 475V494Q719 503 727 503H1157" fill="none" stroke="#c8191e" stroke-width="6"/>
          <g fill="#f8d21c">
            <rect x="722" y="470" width="4" height="4"/><rect x="838" y="470" width="4" height="4"/><rect x="954" y="470" width="4" height="4"/><rect x="1070" y="470" width="4" height="4"/>
            <rect x="722" y="506" width="4" height="4"/><rect x="837" y="506" width="4" height="4"/><rect x="952" y="506" width="4" height="4"/><rect x="1068" y="506" width="4" height="4"/>
          </g>
          <!-- leaders -->
          <path d="M1090 452L1143 346L1163 320" fill="none" stroke="#aaa" stroke-dasharray="2 2"/>
          <path d="M1195 246V467M1191 467h8M1193 469l4-4" fill="none" stroke="#fff"/>
          <path d="M1090 491h68M1155 488l3 6M1090 489v4" fill="none" stroke="#fff"/>
          <text x="1129" y="495" text-anchor="middle" font-size="16" textLength="24" lengthAdjust="spacingAndGlyphs" fill="#fff">100</text>
          <text x="1122" y="488" text-anchor="middle" font-size="11" fill="#0fe30f">100</text>
          <text transform="translate(1191 345) rotate(-90)" text-anchor="middle" font-size="11" fill="#0fe30f">350</text>
          <text x="1163" y="317" font-size="28" font-weight="300" fill="#c4c4c4">全部纵筋</text>
          <text x="1288" y="317" font-size="28" fill="#16e016">按截面</text>
        </svg>
      </div>
      <div class="dbar d-flex align-items-center" style="height:25px;width:235px;margin-top:3px;gap:4px;padding-left:4px">
        <span class="tool" style="gap:4px"><svg class="ic"><use href="#i-ortho"/></svg>正交</span>
        <span class="tool ms-1" style="gap:5px"><svg class="ic"><use href="#i-dyn"/></svg>动态输入</span>
        <span class="tool" style="gap:4px;margin-left:5px"><svg class="ic"><use href="#i-perp"/></svg>垂点</span>
        <span class="tool" style="gap:4px;margin-left:3px"><svg class="ic"><use href="#i-mid"/></svg>中点</span>
      </div>
    </div>
    <div class="dlg-status d-flex gap-1">
      <div style="width:97px;color:#333">(X: 258 Y: 350)</div>
      <div class="flex-grow-1 position-relative">选择钢筋进行编辑，选择标注进行修改或移动;
        <svg class="position-absolute bottom-0 end-0" width="10" height="10"><path d="M8 1h2v2H8zM4 5h2v2H4zM8 5h2v2H8zM0 8h2v2H0zM4 8h2v2H4zM8 8h2v2H8z" fill="#bbb"/></svg>
      </div>
    </div>
  </div>

  <!-- status bar -->
  <div class="status-bar d-flex">
    <div style="width:148px"></div>
    <div style="width:78px">层高<span class="mono">:2.8m</span></div>
    <div style="width:98px">底标高<span class="mono">:17.55m</span></div>
    <div style="width:47px"><span class="mono">0</span></div>
    <div style="width:914px">名称在当前层当前构件类型下不允许重名</div>
    <div style="width:69px;margin:0"><span class="mono">332.6 FPS</span></div>
  </div>

  <!-- taskbar -->
  <div class="task-bar d-flex align-items-center">
    <div class="start-cell"><svg width="16" height="16" viewBox="0 0 16 16"><path d="M0 2.500l7-1v6H0zM8 1.300l8-1.200V7.500H8zM0 8.500h7v6l-7-1zM8 8.500h8v7.400l-8-1.200z" fill="#fff"/></svg></div>
    <div class="search-task d-flex align-items-center">
      <span class="cortana"></span><span>在这里输入你要搜索的内容</span>
      <svg class="ms-auto me-2" width="14" height="18" viewBox="0 0 14 18"><rect x="4" y="1" width="6" height="11" rx="3" fill="none" stroke="#999"/><path d="M1 8c0 7 12 7 12 0M7 14v3M4 17h6" fill="none" stroke="#999"/></svg>
    </div>
    <div class="t-cell" style="margin-left:1px"><svg width="20" height="16"><path d="M3 1.500h-2v13h2M17 1.500h2v13h-2M4.500 .5h11v15h-11z" fill="none" stroke="#eee"/></svg></div>
    <div class="t-cell ms-2"><svg width="24" height="24" viewBox="0 0 24 24"><path d="M12 12C6 12 2 8 5 3c4-3 9 0 7 9zM12 12c0-6 4-10 9-7 3 4 0 9-9 7zM12 12c6 0 10 4 7 9-4 3-9 0-7-9zM12 12c0 6-4 10-9 7-3-4 0-9 9-7z" fill="#ddd"/></svg></div>
    <div class="t-cell ms-2"><svg width="24" height="24" viewBox="0 0 24 24"><path d="M5 12.500H20C20 7 16 4 12 4 7 4 4 8 4 12.500 4 18 8 21 12 21c3 0 6-1 8-3" fill="none" stroke="#eee" stroke-width="3.200"/></svg></div>
    <div class="t-cell ms-1"><svg width="20" height="20" viewBox="0 0 20 20"><path d="M10 18a8 8 0 1 1 8-8c0 3-3 4-5 3M10 14a4 4 0 1 1 4-4" fill="none" stroke="#bbb" stroke-width="1.500"/></svg></div>
    <span class="tsep" style="height:14px;background:#444;margin-left:4px"></span>
    <div class="t-cell" style="margin-left:22px"><svg width="26" height="26" viewBox="0 0 24 24"><path d="M5 12.500H20C20 7 16 4 12 4 7 4 4 8 4 12.500 4 18 8 21 12 21c3 0 6-1 8-3" fill="none" stroke="#0a78d7" stroke-width="4"/></svg></div>
    <div class="t-cell run"><svg width="26" height="26" viewBox="0 0 26 26"><path d="M6 14H20C20 9 17 7 13 7 8 7 6 10 6 14.500 6 19 9 21 13 21c3 0 5-1 7-3" fill="none" stroke="#2a9ae8" stroke-width="3.500"/><path d="M3 23C8 12 18 3 24 4" fill="none" stroke="#e8c020" stroke-width="2"/></svg></div>
    <div class="t-cell run"><svg width="24" height="20" viewBox="0 0 24 20"><path d="M1 3h8l2 2h12v14H1z" fill="#f8d880"/><path d="M1 7h22" stroke="#e8b840"/><rect x="8" y="11" width="8" height="8" fill="#2a9ae8"/></svg></div>
    <div class="t-cell run"><svg width="24" height="24" viewBox="0 0 24 24"><circle cx="12" cy="12" r="10" fill="#8ecb30" stroke="#3a8a20"/><path d="M6 12h12M8 8c3-3 6-3 8 0M8 16c3 2 6 2 8 0" fill="none" stroke="#fff" stroke-width="2"/></svg></div>
    <div class="t-cell cur"><svg width="24" height="24" viewBox="0 0 24 24"><rect width="24" height="24" rx="5" fill="#0a8df0"/><path d="M12 4v16M4 12h16" stroke="#fff" stroke-width="2"/><circle cx="8" cy="9" r="2.500" fill="none" stroke="#fff" stroke-width="1.500"/><circle cx="16" cy="15" r="2.500" fill="none" stroke="#fff" stroke-width="1.500"/></svg></div>
    <div class="t-cell run"><svg width="24" height="24" viewBox="0 0 24 24"><rect width="24" height="24" rx="3" fill="#e87818"/><rect x="3" y="3" width="18" height="18" fill="#f8e8a8"/><path d="M6 8h10M6 12h10M6 16h7" stroke="#d06010"/><path d="M20 6L12 16" stroke="#c03010" stroke-width="2"/></svg></div>
    <div class="t-cell run" style="margin-left:-2px"><svg width="26" height="24" viewBox="0 0 26 24"><path d="M22 3C10-2 2 6 4 14c2 7 12 9 16 3 2-4 0-8-6-7l-2 3 5 0c0 3-6 4-9 0-2-5 4-10 11-7z" fill="#2a9ae8"/></svg></div>
    <span class="tsep" style="height:14px;background:#444;margin-left:6px"></span>
    <span class="tray-t" style="margin-left:13px;width:30px;color:#bbb">链接</span>
    <div class="tray-t" style="margin-left:10px;width:56px;line-height:17px;font-size:12.500px">10%<br>CPU使用</div>
    <svg style="margin-left:15px" width="14" height="10"><path d="M1 8l6-6 6 6" fill="none" stroke="#ddd" stroke-width="1.300"/></svg>
    <svg class="ms-2" width="18" height="12"><path d="M0 3h4M2 0v3M2 3v3M4 3h13v8H4z" fill="none" stroke="#eee"/><rect x="6" y="4" width="8" height="6" fill="#eee"/></svg>
    <svg class="ms-2" width="16" height="14"><path d="M1 13a13 13 0 0 1 13-11M5 13a9 9 0 0 1 9-7M9 13a5 5 0 0 1 5-3" fill="none" stroke="#999"/><circle cx="13" cy="12.500" r="1.500" fill="#eee"/></svg>
    <svg class="ms-2" width="16" height="14"><path d="M1 5h3l4-4v12l-4-4H1zM10 4c2 2 2 4 0 6M12 2c3 3 3 7 0 10" fill="none" stroke="#eee"/></svg>
    <svg class="ms-2" width="23" height="13"><rect x=".5" y=".5" width="22" height="12" fill="none" stroke="#eee"/><path d="M3 3.500h17M3 6h17" stroke="#eee" stroke-dasharray="1 1"/><path d="M6 9h11" stroke="#eee"/></svg>
    <span class="ms-2" style="font-size:13px;color:#fff">中</span>
    <span class="ms-3 d-inline-block text-center" style="width:14px;height:14px;background:#e8501c;border-radius:2px;color:#fff;font:700 12px/14px 'Liberation Sans',sans-serif;transform:rotate(-8deg)">S</span>
    <div class="tray-t" style="width:56px;line-height:19px;color:#eee;margin-left:14px">16:27<br>2018/5/5</div>
    <div class="flex-grow-1 d-flex justify-content-center align-items-center h-100" style="background:#000">
      <svg width="16" height="16"><path d="M.5.5h15v11H9l-3 3v-3H.5z" fill="none" stroke="#eee"/></svg>
    </div>
  </div>

  <script>
    // left navigator tree: [icon, name, key, flag]; no icon means a folder row
    const navRows = [
      ["spiral","螺旋板","(B)"],["cap","柱帽","(V)"],["hole","板洞","(N)"],["gridc","板受力筋","(S)"],["gridh","板负筋","(F)"],["strip","楼层板带","(H)","last"],
      ["","基础",""],
      ["beam","基础梁","(F)"],["raft","筏板基础","(M)"],["pit","集水坑","(K)"],["pier","柱墩","(Y)"],["gridc","筏板主筋","(R)"],["gridh","筏板负筋","(X)"],["ind","独立基础","(P)"],["beam","条形基础","(T)"],["cone","桩承台","(V)"],["beam","承台梁","(F)"],["pile","桩","(U)"],["strip","基础板带","(W)","last"],
      ["","其它",""],
      ["post","后浇带","(JD)"],["eave","挑檐","(T)"],["rail","栏板","(K)"],["press","压顶","(YD)","last"],
      ["","自定义",""],
      ["pt","自定义点",""],["ln","自定义线","(X)","sel"],["fc","自定义面",""],["dim","尺寸标注","(W)","end"]
    ];
    const folderIcon = '<svg class="ic" viewBox="0 0 16 16"><path d="M1 3h5l1 1h5v3H4l-3 6z" fill="#e8c050" stroke="#a88018"/><path d="M4 7h11l-3 6H1z" fill="#f8e098" stroke="#a88018"/></svg>';
    let afterCustom = false;
    document.getElementById("navTree").innerHTML = navRows.map(r => {
      const [icon, name, key, flag] = r;
      if (!icon) {
        if (name === "自定义") afterCustom = true;
        return `<div class="tr"><span class="tr-ch"><svg width="10" height="16"><path d="M1 6l4 4 4-4" fill="none" stroke="#555" stroke-width="1.500"/></svg></span>${folderIcon}<span class="tr-folder">${name}</span></div>`;
      }
      const half = flag === "last" || flag === "end" ? " tr-half" : "";
      const l1 = afterCustom ? '<span class="tr-l1 border-0"></span>' : '<span class="tr-l1"></span>';
      const tag = flag === "sel" ? '<svg class="tag-ic" viewBox="0 0 16 16"><rect x=".5" y=".5" width="15" height="15" fill="#fff" stroke="#1c6ab8"/><path d="M3 3v10h3V3zM10 3v10h3V3z" fill="#1c6ab8"/></svg>' : "";
      return `<div class="tr ${flag === "sel" ? "sel" : ""}">${l1}<span class="tr-l2${half}"></span><span class="tr-hz"></span><svg class="ic"><use href="#i-${icon}"/></svg><span class="tr-name">${name}<span class="mono">${key}</span></span>${tag}</div>`;
    }).join("");

    let zdHtml = "";
    for (let n = 57; n <= 90; n++) {
      const cls = (n === 72 ? "on " : "") + (n === 90 ? "tail" : "");
      zdHtml += `<div class="zd ${cls}"><span class="lnk"></span><svg class="zd-ic"><use href="#i-zd"/></svg><span class="nm mono">ZDYX-${n}</span></div>`;
    }
    document.getElementById("zdTree").innerHTML = zdHtml;
  </script>
  <script src="https://cdn.jsdelivr.net/npm/bootstrap@5.3.0/dist/js/bootstrap.bundle.min.js"></script>
</body>
</html>
